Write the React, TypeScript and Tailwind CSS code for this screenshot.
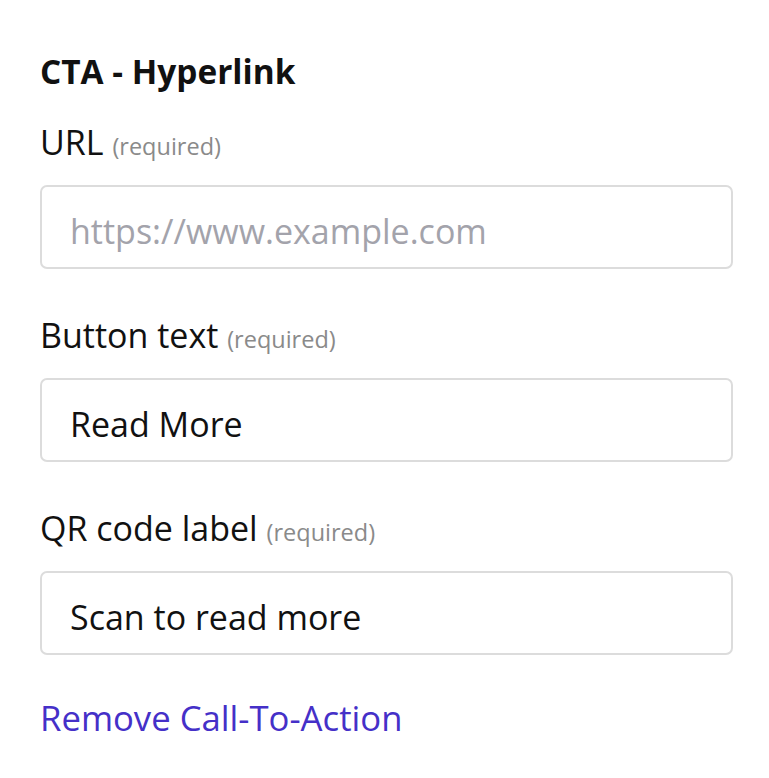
import React, { useState } from 'react';

function Field({ label, value, placeholder }: { label: string; value?: string; placeholder?: string }) {
  const [v, setV] = useState(value ?? '');
  return (
    <div className="mt-[43px]">
      <label className="block text-[34px] leading-[46px] text-[#111111]">
        {label} <span className="text-[23.5px] text-[#8a8a8a]">(required)</span>
      </label>
      <input
        value={v}
        onChange={e => setV(e.target.value)}
        placeholder={placeholder}
        className="mt-[16px] w-full h-[84px] border-2 border-[#dcdcdc] rounded-[7px] px-[28px] pt-[7px] text-[34px] text-[#111111] placeholder:text-[#a3a3ab] outline-none"
      />
    </div>
  );
}

export default function App() {
  return (
    <div className="min-h-[778px] w-[769px] bg-white pl-10 pr-9 pt-[49px] font-['Open_Sans',sans-serif]">
      <h2 className="text-[33.4px] leading-[44px] font-bold text-[#111111]">CTA - Hyperlink</h2>
      <div className="-mt-[17px]">
        <Field label="URL" placeholder="https://www.example.com" />
        <Field label="Button text" value="Read More" />
        <Field label="QR code label" value="Scan to read more" />
      </div>
      <a href="#" className="mt-[40px] inline-block text-[34.7px] leading-[46px] text-[#4530c8]">
        Remove Call-To-Action
      </a>
    </div>
  );
}
